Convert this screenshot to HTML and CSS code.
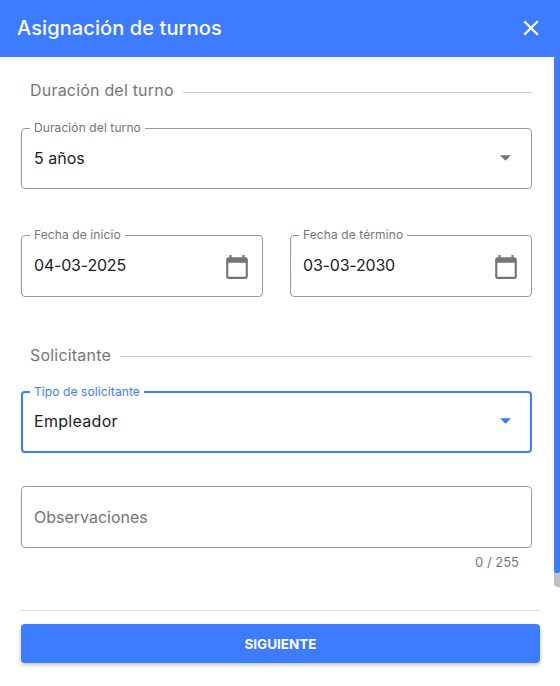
FILE: index.html
```html
<!DOCTYPE html>
<html lang="es">
<head>
    <meta charset="UTF-8">
    <title>Asignación de turnos</title>
    <link rel="stylesheet" href="styles.css">
</head>
<body>
    <div class="dialog">
        <header class="dialog-header">
            <h1>Asignación de turnos</h1>
            <button class="close-btn" aria-label="Cerrar">
                <svg viewBox="0 0 24 24" width="26" height="26"><path d="M19 6.41 17.59 5 12 10.59 6.41 5 5 6.41 10.59 12 5 17.59 6.41 19 12 13.41 17.59 19 19 17.59 13.41 12z"/></svg>
            </button>
        </header>

        <div class="dialog-body">
            <form class="form">
                <div class="section-title"><span>Duración del turno</span></div>

                <fieldset class="field">
                    <legend>Duración del turno</legend>
                    <div class="field-row">
                        <span class="value">5 años</span>
                        <svg class="arrow" viewBox="0 0 12 6" width="11" height="6"><path d="M0 0h12L6 6z"/></svg>
                    </div>
                </fieldset>

                <div class="date-row">
                    <fieldset class="field">
                        <legend>Fecha de inicio</legend>
                        <div class="field-row">
                            <span class="value">04-03-2025</span>
                            <svg class="calendar" viewBox="0 0 24 24" width="26" height="26"><path d="M20 3h-1V1h-2v2H7V1H5v2H4c-1.1 0-2 .9-2 2v16c0 1.1.9 2 2 2h16c1.1 0 2-.9 2-2V5c0-1.1-.9-2-2-2zm0 18H4V8h16v13z"/></svg>
                        </div>
                    </fieldset>
                    <fieldset class="field">
                        <legend>Fecha de término</legend>
                        <div class="field-row">
                            <span class="value">03-03-2030</span>
                            <svg class="calendar" viewBox="0 0 24 24" width="26" height="26"><path d="M20 3h-1V1h-2v2H7V1H5v2H4c-1.1 0-2 .9-2 2v16c0 1.1.9 2 2 2h16c1.1 0 2-.9 2-2V5c0-1.1-.9-2-2-2zm0 18H4V8h16v13z"/></svg>
                        </div>
                    </fieldset>
                </div>

                <div class="section-title section-second"><span>Solicitante</span></div>

                <fieldset class="field field-focus">
                    <legend>Tipo de solicitante</legend>
                    <div class="field-row">
                        <span class="value">Empleador</span>
                        <svg class="arrow" viewBox="0 0 12 6" width="11" height="6"><path d="M0 0h12L6 6z"/></svg>
                    </div>
                </fieldset>

                <div class="textarea-box">Observaciones</div>
                <div class="counter">0 / 255</div>
            </form>
            <div class="scrollbar"><div class="scrollbar-thumb"></div></div>
        </div>

        <footer class="dialog-footer">
            <button type="button" class="next-btn">SIGUIENTE</button>
        </footer>
    </div>
</body>
</html>
```
FILE: styles.css
```css
* {
    box-sizing: border-box;
}
body {
    margin: 0;
    background: #fff;
    font-family: Inter, "Liberation Sans", sans-serif;
    color: #212121;
}
.dialog {
    width: 560px;
    height: 686px;
    display: flex;
    flex-direction: column;
    overflow: hidden;
}
.dialog-header {
    height: 57px;
    flex: none;
    padding: 0 16px 2px 17px;
    background: #3d7bff;
    color: #fff;
    display: flex;
    align-items: center;
    justify-content: space-between;
}
.dialog-header h1 {
    margin: 0;
    font-size: 20px;
    font-weight: 500;
    letter-spacing: 0.1px;
}
.close-btn {
    padding: 0;
    border: none;
    background: none;
    display: flex;
    fill: #fff;
}
.dialog-body {
    height: 530px;
    flex: none;
    display: flex;
}
.form {
    flex: 1;
    padding: 23px 22px 0 21px;
}
.scrollbar {
    width: 6px;
    background: #c1c1c1;
    border-radius: 0 0 0 4px;
    height: 530px;
}
.scrollbar-thumb {
    height: 516px;
    background: #3d7bff;
    border-radius: 2px 0 2px 2px;
}
.section-title {
    display: flex;
    align-items: center;
    height: 20px;
    padding-left: 9px;
    margin-bottom: 22px;
    font-size: 16px;
    letter-spacing: 0.2px;
    color: #757575;
}
.section-title::after {
    content: "";
    flex: 1;
    height: 1px;
    margin: 4px 0 0 9px;
    background: #c8c8c8;
}
.section-second {
    margin-top: 48px;
    margin-bottom: 21px;
}
.section-second::after {
    margin-top: 2px;
}
.field {
    margin: 0;
    padding: 0 12px;
    min-width: 0;
    height: 67px;
    border: 1px solid #999;
    border-radius: 4px;
}
.field legend {
    margin-left: -4px;
    padding: 0 4px;
    font-size: 12px;
    line-height: 12px;
    letter-spacing: 0.1px;
    color: #757575;
}
.field-row {
    height: 48px;
    display: flex;
    align-items: center;
    justify-content: space-between;
}
.value {
    font-size: 16px;
}
.arrow {
    margin-right: 8px;
    fill: #757575;
}
.calendar {
    margin: 4px 0 0;
    fill: #757575;
}
.date-row {
    margin-top: 40px;
    display: grid;
    grid-template-columns: 242px 242px;
    gap: 27px;
}
.date-row .field {
    height: 68px;
}
.date-row .value {
    letter-spacing: -0.2px;
}
.field-focus {
    padding: 0 11px;
    border: 2px solid #3d7bff;
}
.field-focus legend {
    color: #3d7bff;
}
.field-focus .field-row {
    height: 46px;
}
.field-focus .value {
    letter-spacing: 0.3px;
}
.field-focus .arrow {
    fill: #3d7bff;
}
.textarea-box {
    margin-top: 33px;
    height: 62px;
    padding: 0 12px;
    display: flex;
    align-items: center;
    border: 1px solid #999;
    border-radius: 4px;
    font-size: 16px;
    color: #757575;
}
.counter {
    margin-top: 6px;
    padding-right: 13px;
    text-align: right;
    font-size: 13px;
    color: #757575;
}
.dialog-footer {
    padding: 23px 20px 0 21px;
}
.next-btn {
    width: 100%;
    height: 39px;
    padding: 0;
    border: none;
    border-radius: 4px;
    background: #3d7bff;
    color: #fff;
    font: 700 13.5px Inter, "Liberation Sans", sans-serif;
    box-shadow: 0 2px 4px rgba(0, 0, 0, 0.25);
}
.dialog-footer::before {
    content: "";
    display: block;
    height: 1px;
    margin-bottom: 13px;
    background: #e0e0e0;
}
```
